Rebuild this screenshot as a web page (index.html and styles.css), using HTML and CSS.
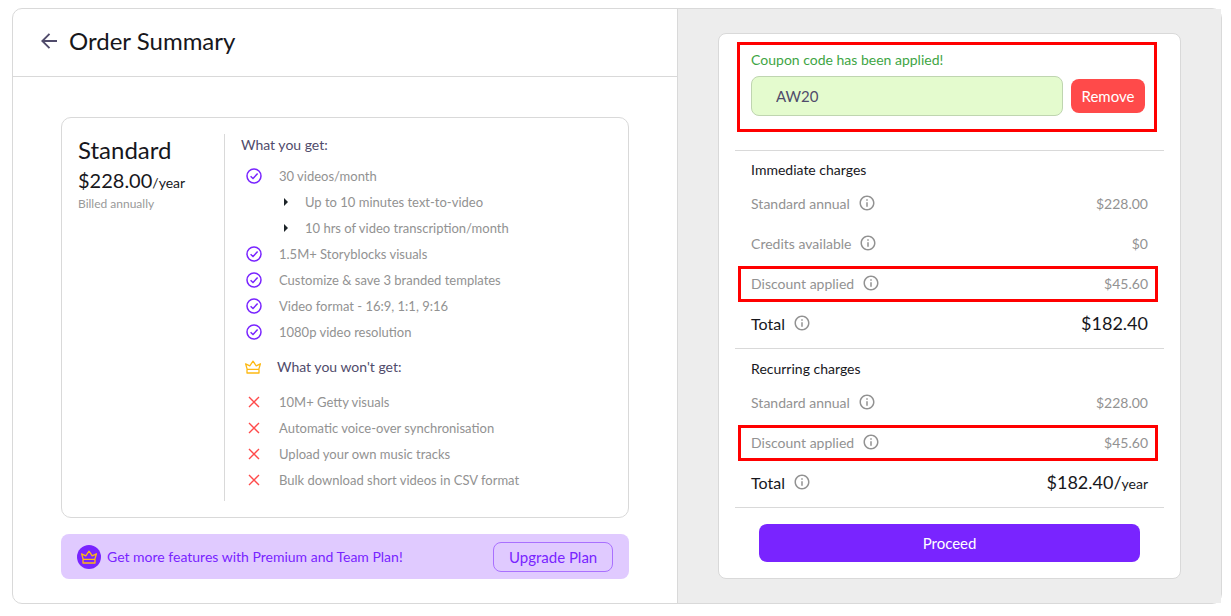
FILE: index.html
```
<!DOCTYPE html>
<html lang="en">
<head>
    <meta charset="UTF-8">
    <meta name="viewport" content="width=device-width, initial-scale=1.0">
    <title>Order Summary</title>
    <link rel="stylesheet" href="styles.css">
</head>
<body>
    <!-- shared icons -->
    <svg class="sprite" aria-hidden="true">
        <symbol id="icon-check" viewBox="0 0 16 16">
            <circle cx="8" cy="8" r="7" fill="none" stroke="currentColor" stroke-width="1.5"/>
            <path d="M4.6 8.2 L7 10.5 L11.6 5.6" fill="none" stroke="currentColor" stroke-width="1.5"/>
        </symbol>
        <symbol id="icon-cross" viewBox="0 0 16 16">
            <path d="M3 3 L13 13 M13 3 L3 13" fill="none" stroke="currentColor" stroke-width="1.4"/>
        </symbol>
        <symbol id="icon-crown" viewBox="0 0 18 16">
            <path d="M3.2 10.4 L1.6 4.8 L5.8 6.8 L9 2.2 L12.2 6.8 L16.4 4.8 L14.8 10.4 Z M3 10.4 V14 H15 V10.4" fill="none" stroke="currentColor" stroke-width="1.3" stroke-linejoin="round"/>
        </symbol>
        <symbol id="icon-info" viewBox="0 0 24 24">
            <path d="M11 7h2v2h-2zm0 4h2v6h-2zm1-9C6.48 2 2 6.48 2 12s4.48 10 10 10 10-4.48 10-10S17.52 2 12 2zm0 18c-4.41 0-8-3.59-8-8s3.59-8 8-8 8 3.59 8 8-3.59 8-8 8z" fill="currentColor"/>
        </symbol>
    </svg>

    <div class="container">
        <main class="summary">
            <header class="summary-header">
                <button type="button" class="back" aria-label="Back">
                    <svg viewBox="0 0 16 16" width="16" height="16"><path d="M16 8 H1.5 M8.5 0.8 L1.3 8 L8.5 15.2" fill="none" stroke="currentColor" stroke-width="1.9"/></svg>
                </button>
                <h1>Order Summary</h1>
            </header>

            <div class="summary-body">
                <section class="plan">
                    <div class="plan-info">
                        <h2>Standard</h2>
                        <div class="plan-price">$228.00<small>/year</small></div>
                        <div class="plan-note">Billed annually</div>
                    </div>
                    <div class="plan-features">
                        <h3>What you get:</h3>
                        <ul class="included">
                            <li><svg><use href="#icon-check"/></svg>30 videos/month</li>
                            <li class="sub">Up to 10 minutes text-to-video</li>
                            <li class="sub">10 hrs of video transcription/month</li>
                            <li><svg><use href="#icon-check"/></svg>1.5M+ Storyblocks visuals</li>
                            <li><svg><use href="#icon-check"/></svg>Customize &amp; save 3 branded templates</li>
                            <li><svg><use href="#icon-check"/></svg>Video format - 16:9, 1:1, 9:16</li>
                            <li><svg><use href="#icon-check"/></svg>1080p video resolution</li>
                        </ul>
                        <h3 class="missing-title"><svg class="crown"><use href="#icon-crown"/></svg>What you won't get:</h3>
                        <ul class="missing">
                            <li><svg><use href="#icon-cross"/></svg>10M+ Getty visuals</li>
                            <li><svg><use href="#icon-cross"/></svg>Automatic voice-over synchronisation</li>
                            <li><svg><use href="#icon-cross"/></svg>Upload your own music tracks</li>
                            <li><svg><use href="#icon-cross"/></svg>Bulk download short videos in CSV format</li>
                        </ul>
                    </div>
                </section>

                <div class="upgrade">
                    <span class="upgrade-icon"><svg class="crown"><use href="#icon-crown"/></svg></span>
                    <span class="upgrade-text">Get more features with Premium and Team Plan!</span>
                    <button type="button" class="upgrade-button">Upgrade Plan</button>
                </div>
            </div>
        </main>

        <aside class="checkout">
            <div class="checkout-card">
                <form class="coupon">
                    <label for="coupon-code">Coupon code has been applied!</label>
                    <div class="coupon-row">
                        <input type="text" id="coupon-code" name="coupon-code" value="AW20" readonly>
                        <button type="button" class="remove">Remove</button>
                    </div>
                </form>

                <section class="charges">
                    <h3>Immediate charges</h3>
                    <dl>
                        <div class="charge"><dt>Standard annual <svg><use href="#icon-info"/></svg></dt><dd>$228.00</dd></div>
                        <div class="charge"><dt>Credits available <svg><use href="#icon-info"/></svg></dt><dd>$0</dd></div>
                        <div class="charge highlight"><dt>Discount applied <svg><use href="#icon-info"/></svg></dt><dd>$45.60</dd></div>
                        <div class="charge total"><dt>Total <svg><use href="#icon-info"/></svg></dt><dd>$182.40</dd></div>
                    </dl>
                </section>

                <section class="charges">
                    <h3>Recurring charges</h3>
                    <dl>
                        <div class="charge"><dt>Standard annual <svg><use href="#icon-info"/></svg></dt><dd>$228.00</dd></div>
                        <div class="charge highlight"><dt>Discount applied <svg><use href="#icon-info"/></svg></dt><dd>$45.60</dd></div>
                        <div class="charge total"><dt>Total <svg><use href="#icon-info"/></svg></dt><dd>$182.40/<small>year</small></dd></div>
                    </dl>
                </section>

                <div class="checkout-footer">
                    <button type="button" class="proceed">Proceed</button>
                </div>
            </div>
        </aside>
    </div>
</body>
</html>
```
FILE: styles.css
```
* {
    box-sizing: border-box;
}

body {
    font-family: Lato, sans-serif;
    font-size: 14px;
    margin: 8px 9px 12px 12px;
    background-color: #fff;
    color: #17171c;
}

h1, h2, h3, ul, dl, dd {
    margin: 0;
    padding: 0;
    font-weight: 400;
}

button, input {
    font-family: inherit;
    font-size: 15px;
}

button {
    border: none;
    border-radius: 8px;
    padding: 0;
    cursor: pointer;
}

small {
    font-size: 14px;
}

.sprite {
    display: none;
}

.container {
    display: grid;
    grid-template-columns: 1.225fr 1fr;
    border: 1px solid #d9d9d9;
    border-radius: 10px;
}

.summary {
    border-right: 1px solid #d9d9d9;
}

.summary-header {
    display: flex;
    align-items: center;
    gap: 12px;
    height: 68px;
    padding: 0 28px 3px;
    border-bottom: 1px solid #d9d9d9;
}

.back {
    display: flex;
    background: none;
    color: #504b6b;
}

h1, h2 {
    font-size: 24px;
    line-height: 32px;
}

.summary-body {
    padding: 40px 48px 24px;
}

.plan {
    display: flex;
    padding: 16px;
    border: 1px solid #d9d9d9;
    border-radius: 10px;
}

.plan-info {
    width: 146px;
}

.plan-price {
    font-size: 20px;
    line-height: 28px;
}

.plan-note {
    font-size: 12px;
    line-height: 14px;
    color: #999;
}

.plan-features {
    flex: 1;
    padding: 0 0 8px 16px;
    border-left: 1px solid #d9d9d9;
}

.plan-features h3 {
    font-size: 14px;
    line-height: 22px;
    color: #504b6b;
}

.plan-features ul {
    list-style: none;
    margin-top: 7px;
    font-size: 13px;
    color: #929292;
}

.plan-features li {
    display: flex;
    align-items: center;
    gap: 17px;
    height: 26px;
    padding-left: 5px;
}

.plan-features li svg {
    width: 16px;
    height: 16px;
}

.plan-features li.sub {
    padding-left: 43px;
}

.sub::before {
    content: "";
    border: 4px solid transparent;
    border-left-color: #1d2429;
    border-right: none;
}

.included svg {
    color: #7924ff;
}

.missing svg {
    color: #ff4a4a;
}

.crown {
    width: 18px;
    height: 16px;
    color: #fdb913;
}

.plan-features .missing-title {
    display: flex;
    align-items: center;
    gap: 15px;
    margin-top: 11px;
    padding-left: 3px;
}

.plan-features .missing {
    margin-top: 11px;
}

.upgrade {
    display: flex;
    align-items: center;
    margin-top: 16px;
    min-height: 45px;
    padding: 7px 16px;
    border-radius: 8px;
    background-color: #e0caff;
    color: #7924ff;
}

.upgrade-icon {
    display: flex;
    align-items: center;
    justify-content: center;
    width: 24px;
    height: 24px;
    border-radius: 50%;
    background-color: #7924ff;
}

.upgrade-text {
    flex: 1;
    margin-left: 6px;
}

.upgrade-button {
    width: 120px;
    height: 30px;
    border: 1px solid #a970ff;
    background: none;
    color: #7924ff;
}

.checkout {
    padding: 24px 40px;
    background-color: #ededed;
}

.checkout-card {
    padding: 8px 16px 16px;
    border: 1px solid #d9d9d9;
    border-radius: 8px;
    background-color: #fff;
}

.coupon {
    margin: 0 7px 18px 2px;
    padding: 5px 9px 13px 11px;
    border: 3px solid #f00;
}

.coupon label {
    display: block;
    line-height: 20px;
    margin-bottom: 6px;
    color: #3ea544;
}

.coupon-row {
    display: flex;
    align-items: center;
    gap: 8px;
}

.coupon input {
    flex: 1;
    min-width: 0;
    height: 40px;
    padding: 0 24px;
    border: 1px solid #bfd5b0;
    border-radius: 8px;
    background-color: #e4fbce;
    color: #504b6b;
}

.remove {
    width: 74px;
    height: 34px;
    background-color: #ff4a4a;
    color: #fff;
}

.charges {
    padding: 6px 0 5px;
    border-top: 1px solid #d9d9d9;
}

.charges + .charges {
    padding-top: 7px;
}

.charges h3 {
    padding: 0 16px;
    font-size: 14px;
    line-height: 26px;
}

.charge {
    position: relative;
    display: flex;
    align-items: center;
    justify-content: space-between;
    height: 40px;
    padding: 0 16px;
    color: #929292;
}

.charge dt {
    display: flex;
    align-items: center;
    gap: 8px;
}

.charge svg {
    width: 18px;
    height: 18px;
    color: #929292;
}

.total {
    font-size: 16px;
    color: #17171c;
}

.total dd {
    font-size: 18px;
}

/* red frame drawn over the row */
.highlight::after {
    content: "";
    position: absolute;
    inset: 3px 6px 1px 3px;
    border: 3px solid #f00;
}

.checkout-footer {
    padding: 16px 24px 0;
    border-top: 1px solid #d9d9d9;
}

.proceed {
    display: block;
    width: 100%;
    height: 38px;
    background-color: #7924ff;
    color: #fff;
}
```
